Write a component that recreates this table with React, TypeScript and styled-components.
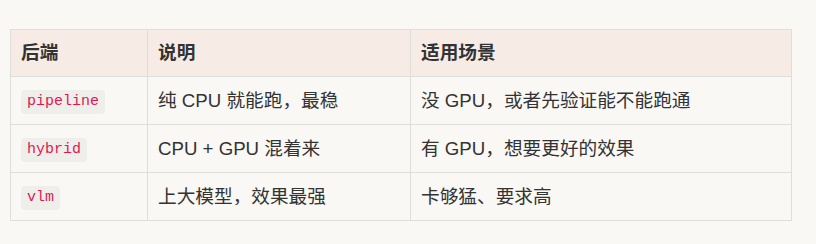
import styled, { createGlobalStyle } from "styled-components";

const GlobalStyle = createGlobalStyle`
  html, body {
    margin: 0;
    padding: 0;
    background: #f9f8f5;
  }
  body {
    font-family: "Liberation Sans", "Noto Sans CJK SC", sans-serif;
    color: #363636;
  }
`;

const Page = styled.div`
  padding: 29px 25px 23px 10px;
`;

const Table = styled.table`
  width: 782px;
  border-collapse: collapse;
  table-layout: fixed;
  font-size: 18.67px;
  line-height: 26px;
`;

const Col = styled.col<{ $w?: number }>`
  width: ${(p) => (p.$w ? `${p.$w}px` : "auto")};
`;

const HeadCell = styled.th`
  background: #f6ebe5;
  border: 1px solid #e0dedb;
  height: 46px;
  padding: 0 10px;
  text-align: left;
  font-weight: 700;
  color: #333;
`;

const Cell = styled.td`
  border: 1px solid #e0dedb;
  height: 47px;
  padding: 0 10px;
  color: #333;
  vertical-align: middle;
`;

const Code = styled.code`
  display: inline-block;
  vertical-align: middle;
  font-family: "Liberation Mono", monospace;
  font-size: 15px;
  line-height: 24px;
  padding: 0 6px;
  border-radius: 4px;
  background: #eeefeb;
  color: #e3174f;
`;

const rows = [
  { backend: "pipeline", desc: "纯 CPU 就能跑，最稳", scene: "没 GPU，或者先验证能不能跑通" },
  { backend: "hybrid", desc: "CPU + GPU 混着来", scene: "有 GPU，想要更好的效果" },
  { backend: "vlm", desc: "上大模型，效果最强", scene: "卡够猛、要求高" },
];

export default function App() {
  return (
    <Page>
      <GlobalStyle />
      <Table>
        <colgroup>
          <Col $w={137} />
          <Col $w={263} />
          <Col />
        </colgroup>
        <thead>
          <tr>
            <HeadCell>后端</HeadCell>
            <HeadCell>说明</HeadCell>
            <HeadCell>适用场景</HeadCell>
          </tr>
        </thead>
        <tbody>
          {rows.map((r) => (
            <tr key={r.backend}>
              <Cell>
                <Code>{r.backend}</Code>
              </Cell>
              <Cell>{r.desc}</Cell>
              <Cell>{r.scene}</Cell>
            </tr>
          ))}
        </tbody>
      </Table>
    </Page>
  );
}
